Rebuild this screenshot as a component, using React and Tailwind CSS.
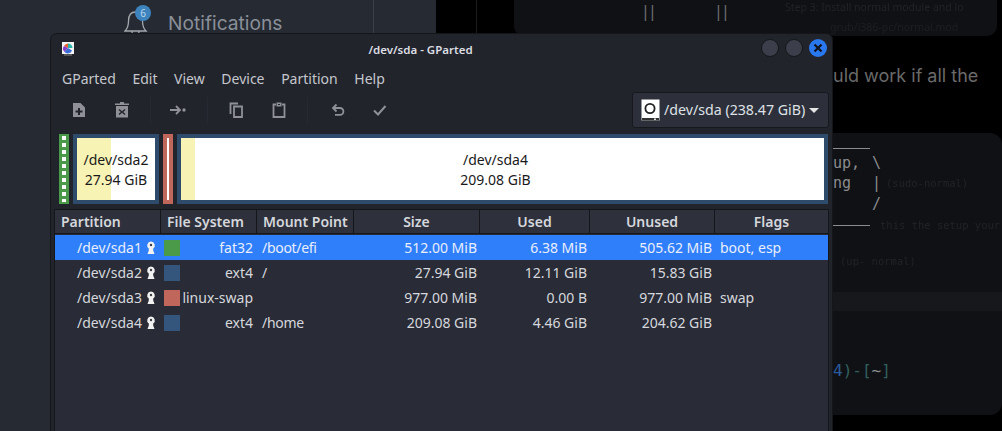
import React from 'react';

const font = { fontFamily: '"Noto Sans", sans-serif' };

const columns = ['Partition', 'File System', 'Mount Point', 'Size', 'Used', 'Unused', 'Flags'];

const rows = [
    { name: '/dev/sda1', color: 'bg-[#4a9a4a]', fs: 'fat32', mount: '/boot/efi', size: '512.00 MiB', used: '6.38 MiB', unused: '505.62 MiB', flags: 'boot, esp', selected: true },
    { name: '/dev/sda2', color: 'bg-[#34567c]', fs: 'ext4', mount: '/', size: '27.94 GiB', used: '12.11 GiB', unused: '15.83 GiB', flags: '' },
    { name: '/dev/sda3', color: 'bg-[#c1665a]', fs: 'linux-swap', mount: '', size: '977.00 MiB', used: '0.00 B', unused: '977.00 MiB', flags: 'swap' },
    { name: '/dev/sda4', color: 'bg-[#34567c]', fs: 'ext4', mount: '/home', size: '209.08 GiB', used: '4.46 GiB', unused: '204.62 GiB', flags: '' },
];

const grid = 'grid grid-cols-[106px_96px_97px_126px_110px_125px_113px]';

const KeyIcon = () => (
    <svg width="10" height="14" viewBox="0 0 10 14" className="shrink-0">
        <path d="M5 0.500a3.800 3.800 0 0 1 2.200 6.900v2.100l1.300 3.500h-7l1.300-3.500v-2.100a3.800 3.800 0 0 1 2.200-6.900z" fill="#f2f2f2" />
        <circle cx="5" cy="4" r="1.200" fill="#3a3c44" />
    </svg>
);

const ToolIcon = ({ children, className }) => (
    <svg width="20" height="20" viewBox="0 0 20 20" className={className}>
        {children}
    </svg>
);

const Toolbar = () => (
    <div className="h-[36px] flex items-center text-[#8f9197] relative">
        <ToolIcon className="ml-[18px]">
            <path fillRule="evenodd" fill="currentColor" d="M4 3h7.500L16 7.500V17H4z M9 8v2.500H6.500v2H9V15h2v-2.500h2.500v-2H11V8z" />
        </ToolIcon>
        <ToolIcon className="ml-[23px]">
            <path fillRule="evenodd" fill="currentColor" d="M8 2h4v1.500h5V5H3V3.500h5z M4 6h12v11.500H4z M7.500 9L6.500 10l2.300 2-2.300 2 1 1 2.500-2.200 2.500 2.200 1-1-2.300-2 2.300-2-1-1-2.500 2.200z" />
        </ToolIcon>
        <div className="ml-[18px] w-px h-[26px] bg-[#282a33]" />
        <ToolIcon className="ml-[17px]">
            <path d="M2 10h9.500M8 6l4 4-4 4" fill="none" stroke="currentColor" strokeWidth="1.800" />
            <circle cx="16" cy="10" r="1.700" fill="currentColor" />
        </ToolIcon>
        <div className="ml-[19px] w-px h-[26px] bg-[#282a33]" />
        <ToolIcon className="ml-[18px]">
            <path d="M12 3.500H4.500V14M8 6.500h8V17H8z" fill="none" stroke="currentColor" strokeWidth="1.800" />
        </ToolIcon>
        <ToolIcon className="ml-[23px]">
            <path d="M7 4.500H4.500V17h11V4.500H13" fill="none" stroke="currentColor" strokeWidth="1.800" />
            <path d="M7.500 2.500h5v4h-5z" fill="currentColor" />
            <path d="M9 4h2v1H9z" fill="#22242c" />
        </ToolIcon>
        <div className="ml-[18px] w-px h-[26px] bg-[#282a33]" />
        <ToolIcon className="ml-[20px]">
            <path d="M5.500 8h6.500a3.400 3.400 0 0 1 0 6.800H7M8.500 4.500L5 8l3.500 3.500" fill="none" stroke="currentColor" strokeWidth="1.800" />
        </ToolIcon>
        <ToolIcon className="ml-[22px]">
            <path d="M4 10.500l4 4 7.500-8.500" fill="none" stroke="currentColor" strokeWidth="2" />
        </ToolIcon>
        <div className="absolute right-[3px] top-0 w-[197px] h-[36px] rounded-[3px] bg-[#2d303b] border border-[#16181d] flex items-center pl-[8px]">
            <svg width="19" height="22" viewBox="0 0 19 22" className="shrink-0">
                <rect x="0.500" y="0.500" width="18" height="21" fill="#fff" />
                <circle cx="9" cy="9.500" r="4.600" fill="none" stroke="#222" strokeWidth="1.800" />
                <rect x="1" y="19" width="17" height="2.500" fill="#333" />
                <rect x="13" y="19.500" width="2" height="1.500" fill="#ddd" />
            </svg>
            <span className="ml-[4px] text-[14.2px] text-[#dfe1e6] whitespace-nowrap">/dev/sda (238.47 GiB)</span>
            <svg width="10" height="5" viewBox="0 0 10 5" className="ml-[4px]">
                <path d="M0 0h10L5 5z" fill="#e6e6e6" />
            </svg>
        </div>
    </div>
);

const Graph = () => (
    <div className="h-[70px] flex ml-[8px] mr-[4px] gap-[4px] text-[14px] leading-[20px] text-[#1a1a1a]">
        <div className="w-[10px] border-2 border-[#4a9a4a] bg-[#4a9a4a]">
            <div className="h-full mx-auto w-[4px] bg-[repeating-linear-gradient(#ffffff_0_4px,#4a9a4a_4px_7px)]" />
        </div>
        <div className="w-[86px] border-4 border-[#2f4b6b] bg-white relative flex flex-col items-center justify-center pt-[1px]">
            <div className="absolute inset-y-0 left-0 w-[34px] bg-[#f7f3b4]" />
            <span className="relative">/dev/sda2</span>
            <span className="relative">27.94 GiB</span>
        </div>
        <div className="w-[10px] border-4 border-[#c1665a] bg-[#c1665a] flex justify-center">
            <div className="w-[2px] bg-white" />
        </div>
        <div className="flex-1 border-4 border-[#2f4b6b] bg-white relative flex flex-col items-center justify-center pt-[1px] pr-[14px]">
            <div className="absolute inset-y-0 left-0 w-[14px] bg-[#f7f3b4]" />
            <span className="relative">/dev/sda4</span>
            <span className="relative">209.08 GiB</span>
        </div>
    </div>
);

const Table = () => (
    <div className="mt-[5px] mx-[3px] h-[240px] bg-[#292b36] border-x border-t border-[#14161a] text-[14px]">
        <div className={`${grid} h-[24px] bg-[#2e313c] border-b border-[#14161a] font-semibold text-[14px] text-[#d5d7dc]`}>
            {columns.map((col, i) => (
                <div
                    key={col}
                    className={`flex items-center border-r border-[#14161a] ${i < 3 ? 'pl-[6px]' : 'justify-center'} ${i === 6 ? 'border-r-0' : ''}`}
                >
                    {col}
                </div>
            ))}
        </div>
        <div className="pt-[1px]">
            {rows.map((row) => (
                <div
                    key={row.name}
                    className={`${grid} h-[25px] items-center whitespace-nowrap ${row.selected ? 'bg-[#2f7ffb] text-[#e9eefb]' : 'text-[#d6d8dd]'}`}
                >
                    <div className="flex items-center pl-[22px]">
                        <span className="w-[69px]">{row.name}</span>
                        <KeyIcon />
                    </div>
                    <div className="flex items-center pl-[3px] pr-[4px]">
                        <span className={`w-[16px] h-[16px] shrink-0 ${row.color}`} />
                        <span className="flex-1 text-right">{row.fs}</span>
                    </div>
                    <div className="pl-[5px] tracking-[-0.3px]">{row.mount}</div>
                    <div className="text-right pr-[3px]">{row.size}</div>
                    <div className="text-right pr-[3px]">{row.used}</div>
                    <div className="text-right pr-[3px]">{row.unused}</div>
                    <div className="pl-[5px]">{row.flags}</div>
                </div>
            ))}
        </div>
    </div>
);

const Backdrop = () => (
    <>
        <div className="absolute inset-y-0 left-0 w-[436px] bg-[#252a33]">
            <div className="absolute left-[373px] inset-y-0 w-px bg-[#3b4048]" />
            <svg width="24" height="30" viewBox="0 0 24 30" className="absolute left-[124px] top-[6px]" fill="none" stroke="#a3a8ad" strokeWidth="1.300">
                <path d="M1 25c3-3 3.500-6 3.500-10C4.500 9 7 6 11.500 6s7 3 7 9c0 4 .5 7 3.500 10z" />
                <path d="M8 25c0 3 1.500 4.500 3.500 4.500S15 28 15 25" />
            </svg>
            <div className="absolute left-[135px] top-[5px] w-[16px] h-[16px] rounded-full bg-[#3d84bf] text-[10px] leading-[16px] text-center text-[#b9d4ea]">6</div>
            <div className="absolute left-[168px] top-[9px] text-[19.200px] leading-[28px] text-[#8a9098]" style={{ fontFamily: 'Inter, sans-serif' }}>Notifications</div>
        </div>
        <div className="absolute inset-y-0 left-[436px] right-0 bg-black">
            <div className="absolute left-[40px] top-0 h-[33px] w-px bg-[#1c1c1c]" />
        </div>
        <div className="absolute left-[514px] top-0 w-[483px] h-[36px] bg-[#101115] rounded-b-[10px]">
            <span className="absolute left-[127px] top-0 text-[16px] leading-[22px] text-[#6f7074] tracking-[-1.800px]">||</span>
            <span className="absolute left-[200px] top-0 text-[16px] leading-[22px] text-[#6f7074] tracking-[-1.800px]">||</span>
            <span className="absolute left-[271px] top-0 text-[10.500px] leading-[14px] text-[#222327] blur-[0.7px] whitespace-nowrap">Step 3: Install normal module and lo</span>
            <span className="absolute left-[316px] top-[20px] text-[10.500px] text-[#1e1f23] blur-[0.7px] whitespace-nowrap">grub/i386-pc/normal.mod</span>
        </div>
        <div className="absolute left-[833px] top-[62px] text-[18px] leading-[28px] text-[#6a6a6a] whitespace-nowrap" style={{ fontFamily: 'Inter, sans-serif' }}>uld work if all the</div>
        <div className="absolute left-[700px] top-[133px] w-[302px] h-[282px] bg-[#101115] rounded-[12px] text-[#8b8c8e]" style={{ fontFamily: '"DejaVu Sans Mono", monospace' }}>
            <div className="absolute left-[120px] top-[15px] w-[50px] h-px bg-[#8b8c8e]" />
            <div className="absolute left-[133px] top-[20px] text-[15px] leading-[20px]">up,</div>
            <div className="absolute left-[172px] top-[20px] text-[15px] leading-[20px]">\</div>
            <div className="absolute left-[133px] top-[40px] text-[15px] leading-[20px]">ng</div>
            <div className="absolute left-[172px] top-[40px] text-[15px] leading-[20px]">|</div>
            <div className="absolute left-[172px] top-[61px] text-[15px] leading-[20px]">/</div>
            <div className="absolute left-[120px] top-[92px] w-[50px] h-px bg-[#8b8c8e]" />
            <div className="absolute left-[186px] top-[43px] text-[10.500px] text-[#222327] blur-[0.7px] whitespace-nowrap">(sudo-normal)</div>
            <div className="absolute left-[180px] top-[85px] text-[10.500px] text-[#222327] blur-[0.7px] whitespace-nowrap">this the setup your</div>
            <div className="absolute left-[140px] top-[121px] text-[10.500px] text-[#222327] blur-[0.7px] whitespace-nowrap">(up- normal)</div>
            <div className="absolute left-0 right-0 top-[159px] h-[19px] bg-[#17181b]" />
            <div className="absolute left-[133px] top-[227px] text-[16px] leading-[22px] whitespace-pre">
                <span className="text-[#2b5d9c]">4</span>
                <span className="text-[#31605f]">)-[</span>
                <span className="text-[#8d9094]">~</span>
                <span className="text-[#31605f]">]</span>
            </div>
        </div>
    </>
);

export default function App() {
    return (
        <div className="relative w-[1002px] h-[431px] overflow-hidden bg-black" style={font}>
            <Backdrop />
            <div className="absolute left-[50px] top-[33px] w-[783px] h-[430px] bg-[#22242c] border border-[#14161a] rounded-t-[7px] flex flex-col">
                <div className="h-[31px] relative flex items-center justify-center pr-[42px] font-semibold text-[11.500px] text-[#dcdee3]">
                    <svg width="12" height="14" viewBox="0 0 12 14" className="absolute left-[11px] top-[8px]">
                        <rect width="12" height="12" fill="#f4f4f4" />
                        <path d="M6 1.500a4.500 4.500 0 0 1 4.500 4.500L6 6z" fill="#2bb5a8" />
                        <path d="M6 1.500A4.500 4.500 0 0 0 2 4l4 2z" fill="#e8612e" />
                        <path d="M2 4a4.500 4.500 0 0 0 .5 6L6 6z" fill="#8a3fc8" />
                        <path d="M2.500 10A4.500 4.500 0 0 0 10 8.500L6 6z" fill="#3a6fd8" />
                        <rect x="2" y="12" width="8" height="2" fill="#555" />
                    </svg>
                    /dev/sda - GParted
                    <div className="absolute right-[5px] top-[5px] flex items-center gap-[6px]">
                        <div className="w-[18px] h-[18px] rounded-full bg-[#3c3f4b] border border-[#15161a]" />
                        <div className="w-[18px] h-[18px] rounded-full bg-[#3c3f4b] border border-[#15161a]" />
                        <div className="w-[18px] h-[18px] rounded-full bg-[#2a78ef] flex items-center justify-center">
                            <svg width="10" height="10" viewBox="0 0 10 10">
                                <path d="M1.500 1.500l7 7M8.500 1.500l-7 7" stroke="#10131c" strokeWidth="2.200" />
                            </svg>
                        </div>
                    </div>
                </div>
                <div className="h-[27px] flex items-center pl-[11px] gap-[16.600px] text-[14px] text-[#c5c7cd]">
                    <span>GParted</span>
                    <span>Edit</span>
                    <span>View</span>
                    <span>Device</span>
                    <span>Partition</span>
                    <span>Help</span>
                </div>
                <Toolbar />
                <div className="h-[6px]" />
                <Graph />
                <Table />
            </div>
        </div>
    );
}
